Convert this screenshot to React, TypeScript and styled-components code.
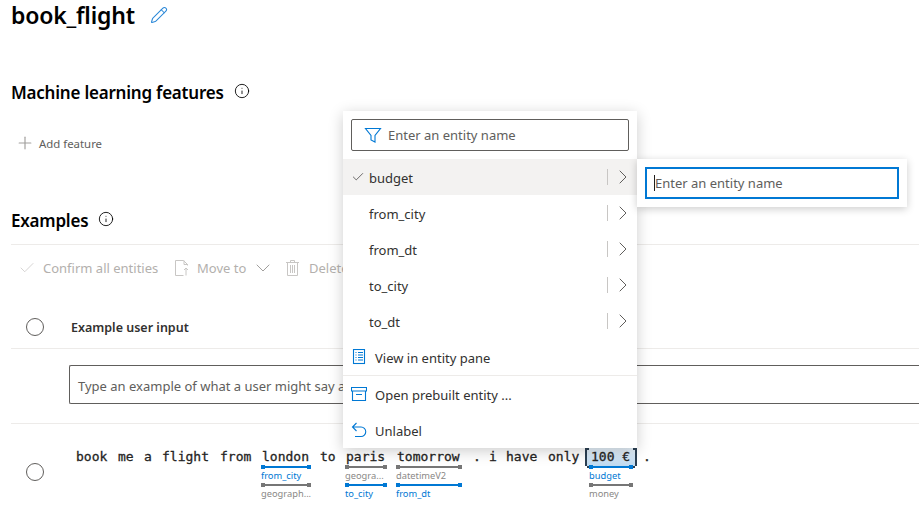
import { FC } from 'react'
import styled, { createGlobalStyle } from 'styled-components'
import { Check, ChevronDown, ChevronRight, Info, Pencil, Plus } from 'lucide-react'

const GlobalStyle = createGlobalStyle`
    html, body {
        margin: 0;
        padding: 0;
        background: #fff;
        font-family: "Noto Sans", "Open Sans", Arial, sans-serif;
        color: #323130;
    }
`

const Page = styled.div`
    position: relative;
    width: 919px;
    height: 508px;
    overflow: hidden;
    padding-left: 11px;
    box-sizing: border-box;
`

const TitleRow = styled.div`
    display: flex;
    align-items: center;
    gap: 15px;
    height: 30px;
    color: #2b88d8;
`

const Title = styled.h1`
    margin: 0;
    font-size: 23px;
    line-height: 30px;
    font-weight: 600;
    color: #000;
    letter-spacing: -0.2px;
`

const Heading = styled.div<{ $top: number }>`
    display: flex;
    align-items: center;
    gap: 10px;
    height: 24px;
    margin-top: ${p => p.$top}px;
`

const HeadingText = styled.h2`
    margin: 0;
    font-size: 17px;
    line-height: 24px;
    font-weight: 600;
    color: #000;
    letter-spacing: -0.22px;
`

const InfoIcon = styled(Info)`
    margin-top: -4px;
    color: #000;
`

const AddFeature = styled.div`
    display: flex;
    align-items: center;
    gap: 4px;
    height: 20px;
    margin: 28px 0 0 4px;
    font-size: 11.4px;
    color: #605e5c;
`

const Divider = styled.div<{ $top?: number }>`
    height: 1px;
    background: #edebe9;
    margin-top: ${p => p.$top ?? 0}px;
`

const Toolbar = styled.div`
    display: flex;
    align-items: center;
    height: 20px;
    margin: 13px 0 0 7px;
    font-size: 13px;
    color: #b3b0ad;
    white-space: nowrap;
`

const ToolItem = styled.span<{ $gap: number; $width: number }>`
    display: flex;
    align-items: center;
    gap: ${p => p.$gap}px;
    width: ${p => p.$width}px;
    flex: none;
`

const MoveChevron = styled(ChevronDown)`
    margin-left: -3px;
    color: #a19f9d;
`

const HeaderRow = styled.div`
    display: flex;
    align-items: center;
    height: 38px;
    margin-top: 30px;
`

const Circle = styled.span`
    flex: none;
    width: 16px;
    height: 16px;
    border: 1px solid #605e5c;
    border-radius: 50%;
    margin-left: 15px;
`

const HeaderLabel = styled.span`
    margin-left: 27px;
    font-size: 12.5px;
    font-weight: 600;
    color: #323130;
`

const ExampleInput = styled.div`
    height: 39px;
    box-sizing: border-box;
    margin: 16px 0 0 58px;
    border: 1px solid #605e5c;
    border-right: 0;
    border-radius: 2px 0 0 2px;
    padding-left: 8px;
    font-size: 13px;
    line-height: 40px;
    color: #605e5c;
    white-space: nowrap;
`

const ExampleRow = styled.div`
    display: flex;
    align-items: flex-start;
    margin-top: 24px;
`

const RowCircle = styled(Circle)`
    margin-top: 15px;
`

const Tokens = styled.div`
    display: flex;
    align-items: flex-start;
    margin-left: 32px;
`

const TokenCell = styled.div<{ $width: number; $gap: number }>`
    flex: none;
    width: ${p => p.$width}px;
    margin-right: ${p => p.$gap}px;
`

const Word = styled.div<{ $picked?: boolean }>`
    position: relative;
    height: 18px;
    font-family: "DejaVu Sans Mono", "Liberation Mono", monospace;
    font-size: 13px;
    line-height: 17px;
    font-weight: 400;
    -webkit-text-stroke: 0.3px #252423;
    color: #252423;
    white-space: pre;
    ${p => p.$picked && `
        margin: 0 -1px;
        padding-left: 4px;
        background: linear-gradient(180deg, #e6f1fa, #bfdaf0);
        border-left: 2px solid #2b3f52;
        border-right: 2px solid #2b3f52;
        box-sizing: border-box;

        &::before, &::after {
            content: '';
            position: absolute;
            width: 2px;
            height: 16px;
            border-top: 2px solid #2b3f52;
            border-bottom: 2px solid #2b3f52;
            top: 0;
        }
        &::before { left: 0; }
        &::after { right: 0; }
    `}
`

const Bar = styled.div<{ $blue?: boolean; $inset?: number }>`
    position: relative;
    height: 2px;
    margin: 0 ${p => p.$inset ?? -1}px;
    background: ${p => (p.$blue ? '#0078d4' : '#767676')};

    &::before, &::after {
        content: '';
        position: absolute;
        top: -1px;
        width: 4px;
        height: 4px;
        background: inherit;
    }
    &::before { left: 0; }
    &::after { right: 0; }
`

const TagLabel = styled.div<{ $blue?: boolean; $inset?: number }>`
    height: 16px;
    margin-left: ${p => p.$inset ?? -1}px;
    font-size: 9.3px;
    line-height: 15px;
    color: ${p => (p.$blue ? '#0078d4' : '#8a8886')};
    white-space: nowrap;
`

const Menu = styled.div`
    position: absolute;
    left: 343px;
    top: 111px;
    width: 294px;
    height: 337px;
    background: #fff;
    box-shadow: 0 3px 14px rgba(0, 0, 0, 0.2);
    padding-top: 8px;
    box-sizing: border-box;
`

const SearchBox = styled.div`
    display: flex;
    align-items: center;
    gap: 6px;
    height: 32px;
    box-sizing: border-box;
    margin: 0 8px 8px;
    padding-left: 12px;
    border: 1px solid #605e5c;
    border-radius: 2px;
    font-size: 13px;
    color: #605e5c;
`

const MenuItem = styled.div<{ $active?: boolean }>`
    display: flex;
    align-items: center;
    height: 36px;
    padding-left: 8px;
    background: ${p => (p.$active ? '#f3f2f1' : 'transparent')};
    font-size: 13px;
    color: #323130;
`

const CheckSlot = styled.span`
    flex: none;
    display: flex;
    width: 18px;
`

const ItemName = styled.span`
    flex: 1;
    margin-top: 2px;
`

const SplitLine = styled.span`
    flex: none;
    width: 1px;
    height: 16px;
    background: #c8c6c4;
`

const SplitArrow = styled(ChevronRight)`
    flex: none;
    margin: 0 2px 0 3px;
    color: #605e5c;
`

const ActionItem = styled.div`
    display: flex;
    align-items: center;
    gap: 8px;
    height: 36px;
    padding-left: 8px;
    font-size: 13px;
    color: #323130;
`

const MenuDivider = styled.div`
    height: 1px;
    background: #edebe9;
`

const SubMenu = styled.div`
    position: absolute;
    left: 637px;
    top: 159px;
    width: 270px;
    height: 48px;
    padding: 8px;
    box-sizing: border-box;
    background: #fff;
    box-shadow: 0 2px 8px rgba(0, 0, 0, 0.2);
`

const FocusInput = styled.div`
    display: flex;
    align-items: center;
    height: 32px;
    box-sizing: border-box;
    border: 2px solid #0078d4;
    padding-left: 7px;
    font-size: 13px;
    color: #605e5c;
`

const Caret = styled.span`
    width: 1px;
    height: 16px;
    background: #201f1e;
`

const FilterIcon: FC = () => (
    <svg width="18" height="18" viewBox="0 0 18 18" fill="none" stroke="#0078d4" strokeWidth="1.1">
        <path d="M1.5 2.5h15L11 9.5v6.5l-4-2V9.5z" />
    </svg>
)

const ListIcon: FC = () => (
    <svg width="16" height="16" viewBox="0 0 16 16" fill="none" stroke="#0078d4" strokeWidth="1.1">
        <rect x="2.5" y="0.5" width="11" height="14" />
        <path d="M4.5 3.5h1M7 3.5h5M4.5 6h1M7 6h5M4.5 8.5h1M7 8.5h5M4.5 11h1M7 11h5" />
    </svg>
)

const ArchiveIcon: FC = () => (
    <svg width="16" height="16" viewBox="0 0 16 16" fill="none" stroke="#0078d4" strokeWidth="1.1">
        <path d="M.5 1.5h15v3.5H.5zM1.5 5v9.5h13V5M5 8.5h6" />
    </svg>
)

const UndoIcon: FC = () => (
    <svg width="16" height="16" viewBox="0 0 16 16" fill="none" stroke="#0078d4" strokeWidth="1.1">
        <path d="M5.5 1L1.5 5l4 4M1.5 5H10a4.5 4.5 0 0 1 0 9.5H4" />
    </svg>
)

const MoveIcon: FC = () => (
    <svg width="14" height="16" viewBox="0 0 14 16" fill="none" stroke="#c8c6c4" strokeWidth="1">
        <path d="M.5.5h8l4 4v1M.5.5v15h8M9 .5v4h4M11 8v7.5M9 10l2-2 2 2" />
    </svg>
)

const TrashIcon: FC = () => (
    <svg width="13" height="16" viewBox="0 0 13 16" fill="none" stroke="#c8c6c4" strokeWidth="1">
        <path d="M0 2.5h13M4.5 2.5v-2h4v2M1.5 2.5v13h10v-13M4.5 5v8M6.5 5v8M8.5 5v8" />
    </svg>
)

interface Tag {
    text: string
    blue?: boolean
}

interface Token {
    word: string
    width: number
    gap: number
    tags?: Tag[]
    picked?: boolean
}

const tokens: Token[] = [
    { word: 'book', width: 32, gap: 10 },
    { word: 'me', width: 16, gap: 10 },
    { word: 'a', width: 8, gap: 10 },
    { word: 'flight', width: 47, gap: 11 },
    { word: 'from', width: 32, gap: 10 },
    { word: 'london', width: 48, gap: 10, tags: [{ text: 'from_city', blue: true }, { text: 'geograph...' }] },
    { word: 'to', width: 16, gap: 10 },
    { word: 'paris', width: 40, gap: 11, tags: [{ text: 'geogra...' }, { text: 'to_city', blue: true }] },
    { word: 'tomorrow', width: 64, gap: 12, tags: [{ text: 'datetimeV2' }, { text: 'from_dt', blue: true }] },
    { word: '.', width: 8, gap: 8 },
    { word: 'i', width: 8, gap: 9 },
    { word: 'have', width: 32, gap: 10 },
    { word: 'only', width: 32, gap: 6 },
    { word: '100 €', width: 50, gap: 7, picked: true, tags: [{ text: 'budget', blue: true }, { text: 'money' }] },
    { word: '.', width: 8, gap: 0 },
]

const entities = ['budget', 'from_city', 'from_dt', 'to_city', 'to_dt']

export default function App() {
    return (
        <Page>
            <GlobalStyle />
            <TitleRow>
                <Title>book_flight</Title>
                <Pencil size={18} strokeWidth={1.4} />
            </TitleRow>
            <Heading $top={51}>
                <HeadingText>Machine learning features</HeadingText>
                <InfoIcon size={16} strokeWidth={1.3} />
            </Heading>
            <AddFeature>
                <Plus size={20} strokeWidth={1.4} color="#a19f9d" />
                Add feature
            </AddFeature>
            <Heading $top={56}>
                <HeadingText>Examples</HeadingText>
                <InfoIcon size={16} strokeWidth={1.3} />
            </Heading>
            <Divider $top={11} />
            <Toolbar>
                <ToolItem $gap={7} $width={157}>
                    <Check size={18} strokeWidth={1} color="#c8c6c4" />
                    Confirm all entities
                </ToolItem>
                <ToolItem $gap={8} $width={111}>
                    <MoveIcon />
                    Move to
                    <MoveChevron size={24} strokeWidth={1} />
                </ToolItem>
                <ToolItem $gap={10} $width={80}>
                    <TrashIcon />
                    Delete
                </ToolItem>
            </Toolbar>
            <HeaderRow>
                <Circle />
                <HeaderLabel>Example user input</HeaderLabel>
            </HeaderRow>
            <Divider $top={2} />
            <ExampleInput>Type an example of what a user might say and</ExampleInput>
            <Divider $top={19} />
            <ExampleRow>
                <RowCircle />
                <Tokens>
                    {tokens.map((t, i) => (
                        <TokenCell key={i} $width={t.width} $gap={t.gap}>
                            <Word $picked={t.picked}>{t.word}</Word>
                            {t.tags?.map(tag => (
                                <div key={tag.text}>
                                    <Bar $blue={tag.blue} $inset={t.picked ? 3 : undefined} />
                                    <TagLabel $blue={tag.blue} $inset={t.picked ? 3 : undefined}>{tag.text}</TagLabel>
                                </div>
                            ))}
                        </TokenCell>
                    ))}
                </Tokens>
            </ExampleRow>
            <Menu>
                <SearchBox>
                    <FilterIcon />
                    Enter an entity name
                </SearchBox>
                {entities.map((name, i) => (
                    <MenuItem key={name} $active={i === 0}>
                        <CheckSlot>{i === 0 && <Check size={14} strokeWidth={1.2} />}</CheckSlot>
                        <ItemName>{name}</ItemName>
                        <SplitLine />
                        <SplitArrow size={24} strokeWidth={1} />
                    </MenuItem>
                ))}
                <ActionItem>
                    <ListIcon />
                    <ItemName>View in entity pane</ItemName>
                </ActionItem>
                <MenuDivider />
                <ActionItem>
                    <ArchiveIcon />
                    <ItemName>Open prebuilt entity ...</ItemName>
                </ActionItem>
                <ActionItem>
                    <UndoIcon />
                    <ItemName>Unlabel</ItemName>
                </ActionItem>
            </Menu>
            <SubMenu>
                <FocusInput>
                    <Caret />
                    Enter an entity name
                </FocusInput>
            </SubMenu>
        </Page>
    )
}
